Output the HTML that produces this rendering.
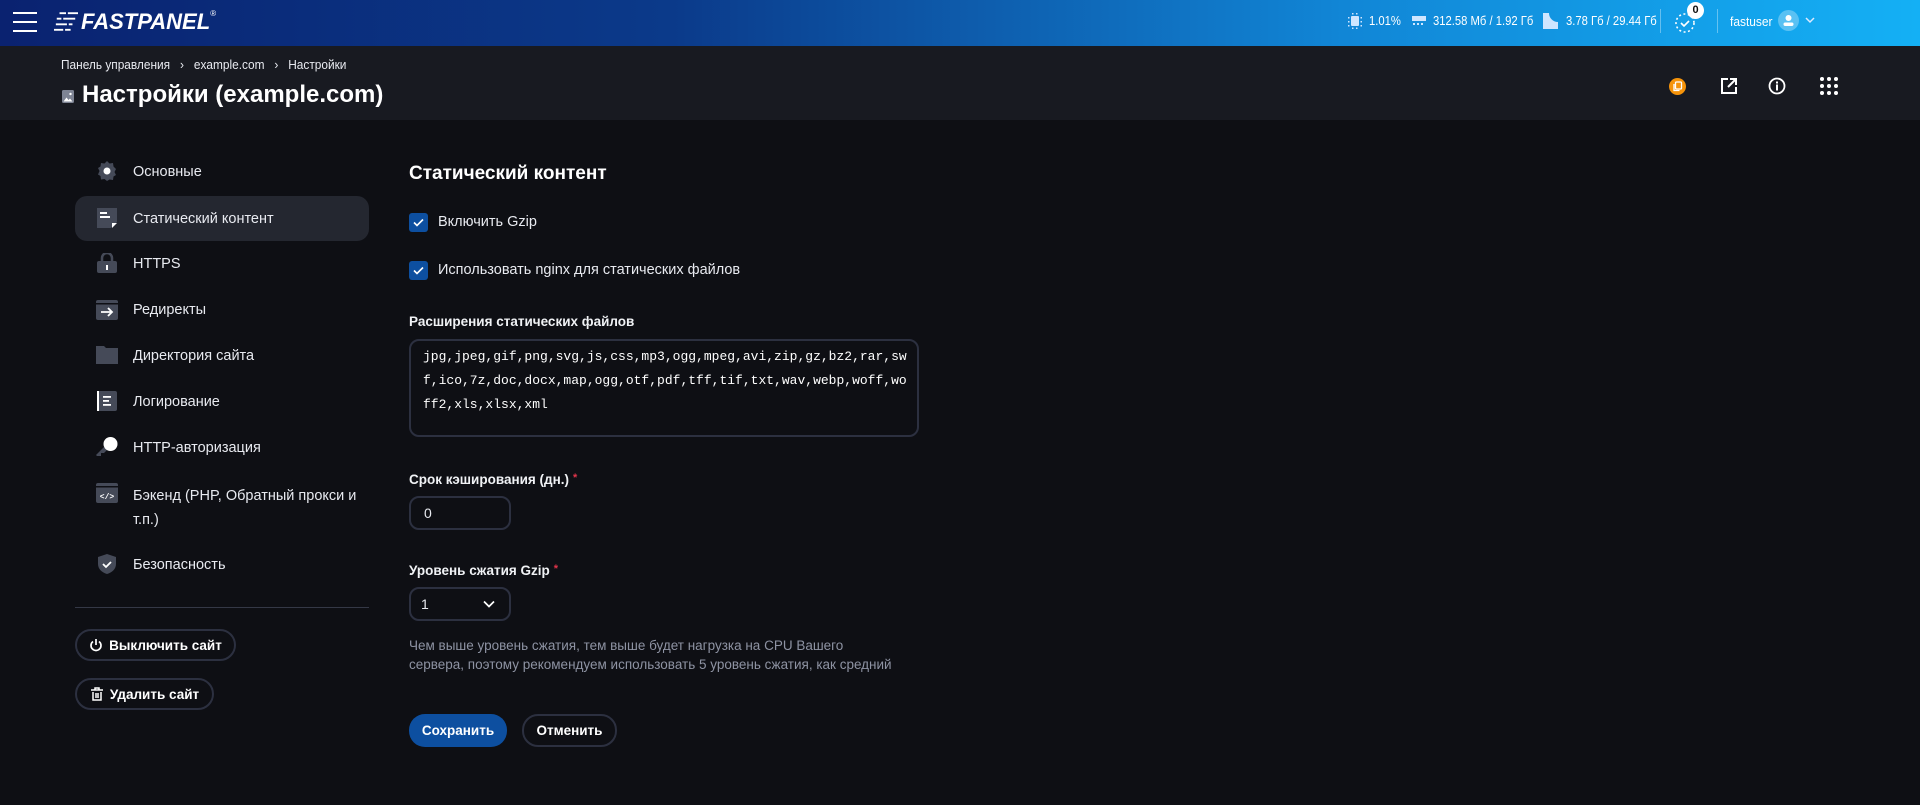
<!DOCTYPE html>
<html><head><meta charset="utf-8"><style>
*{box-sizing:border-box;margin:0;padding:0}
body{width:1920px;height:805px;background:#0e0f14;font-family:"Liberation Sans",sans-serif;color:#e8eaf0;position:relative;overflow:hidden}
.abs{position:absolute}
.hdr{left:0;top:0;width:1920px;height:46px;background:linear-gradient(90deg,#0a2270 0%,#0b3a8a 35%,#1186d6 70%,#14b0f5 100%)}
.sub{left:0;top:46px;width:1920px;height:74px;background:#181a21}
.ht{color:#fff;font-size:12.5px;white-space:nowrap;transform-origin:left center;transform:scaleX(0.9)}
.nav{left:133px;font-size:14.5px;color:#e8eaf0;white-space:nowrap;transform:translateY(-50%)}
.ic{left:96px;width:22px;height:20px;transform:translateY(-50%)}
.lbl{font-size:13.5px;font-weight:bold;color:#f0f2f5;white-space:nowrap}
.star{color:#e0344a;font-size:11px;vertical-align:top;margin-left:4px}
.box{border:2px solid #2c3040;border-radius:10px;background:#0e0f14}
.cb{width:19px;height:19px;background:#0d4fa0;border-radius:3px;left:409px}
.pill{border:2px solid #2c3040;border-radius:16px;font-size:13.5px;font-weight:bold;color:#fff;display:flex;align-items:center;justify-content:center;gap:6px}
</style></head><body>
<div class="abs hdr"></div>
<div class="abs" style="left:13px;top:12px;width:24px;height:2px;background:#fff"></div>
<div class="abs" style="left:13px;top:21px;width:24px;height:2px;background:#fff"></div>
<div class="abs" style="left:13px;top:30px;width:24px;height:2px;background:#fff"></div>
<svg class="abs" style="left:54px;top:11px" width="24" height="21" viewBox="0 0 26 22"><g stroke="#fff" stroke-width="2"><line x1="6" y1="2" x2="26" y2="2"/><line x1="3" y1="8" x2="23" y2="8"/><line x1="2" y1="14" x2="20" y2="14"/><line x1="0" y1="20" x2="18" y2="20"/></g><g fill="#0a2270"><rect x="13" y="0" width="2" height="4"/><rect x="8" y="6" width="2" height="4"/><rect x="14" y="12" width="2" height="4"/><rect x="10" y="18" width="2" height="4"/></g></svg>
<div class="abs" style="left:81px;top:9px;font-size:22px;font-weight:bold;font-style:italic;color:#fff;white-space:nowrap">FASTPANEL<sup style="font-size:8px;font-weight:normal;vertical-align:top">®</sup></div>
<svg class="abs" style="left:1348px;top:13px" width="14" height="16" viewBox="0 0 14 16"><rect x="3" y="3" width="8" height="10" rx="1" fill="#cfe6ff"/><g fill="#cfe6ff"><rect x="0" y="4" width="1.5" height="1.5"/><rect x="0" y="8" width="1.5" height="1.5"/><rect x="0" y="12" width="1.5" height="1.5"/><rect x="12.5" y="4" width="1.5" height="1.5"/><rect x="12.5" y="8" width="1.5" height="1.5"/><rect x="12.5" y="12" width="1.5" height="1.5"/><rect x="4" y="0" width="1.5" height="1.5"/><rect x="8" y="0" width="1.5" height="1.5"/><rect x="4" y="14.5" width="1.5" height="1.5"/><rect x="8" y="14.5" width="1.5" height="1.5"/></g></svg>
<div class="abs ht" style="left:1369px;top:14px">1.01%</div>
<svg class="abs" style="left:1412px;top:15px" width="14" height="12" viewBox="0 0 14 12"><rect x="0" y="1" width="14" height="5" fill="#cfe6ff"/><g fill="#cfe6ff"><rect x="1" y="8" width="2" height="2"/><rect x="5" y="8" width="2" height="2"/><rect x="9" y="8" width="2" height="2"/></g></svg>
<div class="abs ht" style="left:1433px;top:14px">312.58 Мб / 1.92 Гб</div>
<svg class="abs" style="left:1543px;top:13px" width="15" height="16" viewBox="0 0 15 16"><path d="M0 0h6a9 9 0 0 0 9 9v7H0z" fill="#cfe6ff"/></svg>
<div class="abs ht" style="left:1566px;top:14px">3.78 Гб / 29.44 Гб</div>
<div class="abs" style="left:1660px;top:9px;width:1px;height:24px;background:rgba(255,255,255,.35)"></div>
<svg class="abs" style="left:1673px;top:11px" width="24" height="24" viewBox="0 0 24 24"><circle cx="12" cy="12" r="9" fill="none" stroke="#fff" stroke-width="1.6" stroke-dasharray="2 2.5"/><path d="M8 12l3 3 5-5" stroke="#fff" stroke-width="1.6" fill="none"/></svg>
<div class="abs" style="left:1687px;top:2px;width:17px;height:17px;border-radius:50%;background:#fff;color:#111;font-size:11px;font-weight:bold;text-align:center;line-height:17px">0</div>
<div class="abs" style="left:1717px;top:9px;width:1px;height:24px;background:rgba(255,255,255,.35)"></div>
<div class="abs ht" style="left:1730px;top:14px;font-size:13px;transform:scaleX(0.92)">fastuser</div>
<div class="abs" style="left:1778px;top:10px;width:21px;height:21px;border-radius:50%;background:rgba(255,255,255,.3)"></div>
<svg class="abs" style="left:1778px;top:10px" width="21" height="21" viewBox="0 0 21 21"><circle cx="10.5" cy="8" r="3" fill="#fff"/><rect x="5.5" y="12.5" width="10" height="3.5" rx="1.7" fill="#fff"/></svg>
<svg class="abs" style="left:1805px;top:16px" width="10" height="8" viewBox="0 0 10 8"><path d="M1 2l4 4 4-4" stroke="#dceaff" stroke-width="1.5" fill="none"/></svg>

<div class="abs sub"></div>
<div class="abs" style="left:61px;top:58px;font-size:12.5px;color:#e8eaf0;white-space:nowrap;transform-origin:left center;transform:scaleX(0.95)">Панель управления &nbsp;&nbsp;›&nbsp;&nbsp; example.com &nbsp;&nbsp;›&nbsp;&nbsp; Настройки</div>
<svg class="abs" style="left:62px;top:90px" width="12" height="13" viewBox="0 0 12 13"><rect width="12" height="13" rx="1.5" fill="#7e8494"/><path d="M1.5 11.5l3-4 2 2.5 1.5-1.5 2.5 3z" fill="#fff"/><circle cx="8.5" cy="4" r="1.2" fill="#fff"/></svg>
<div class="abs" style="left:82px;top:81px;font-size:24px;font-weight:bold;color:#fff;white-space:nowrap">Настройки (example.com)</div>
<div class="abs" style="left:1669px;top:78px;width:17px;height:17px;border-radius:50%;background:#f5930a"></div>
<svg class="abs" style="left:1672px;top:81px" width="11" height="11" viewBox="0 0 11 11"><rect x="3.5" y="1" width="6" height="7" rx="1" fill="none" stroke="#fff" stroke-width="1.3"/><path d="M2 3v6.5h5.5" fill="none" stroke="#fff" stroke-width="1.3"/></svg>
<svg class="abs" style="left:1720px;top:77px" width="18" height="18" viewBox="0 0 18 18"><path d="M8 2H2v14h14v-6M10 2h6v6M16 2L8 10" fill="none" stroke="#fff" stroke-width="2"/></svg>
<svg class="abs" style="left:1768px;top:77px" width="18" height="18" viewBox="0 0 18 18"><circle cx="9" cy="9" r="7.5" fill="none" stroke="#fff" stroke-width="1.8"/><rect x="8" y="7.5" width="2" height="6" fill="#fff"/><rect x="8" y="4.5" width="2" height="2" fill="#fff"/></svg>
<svg class="abs" style="left:1820px;top:77px" width="18" height="18" viewBox="0 0 18 18"><g fill="#fff"><circle cx="2" cy="2" r="2"/><circle cx="9" cy="2" r="2"/><circle cx="16" cy="2" r="2"/><circle cx="2" cy="9" r="2"/><circle cx="9" cy="9" r="2"/><circle cx="16" cy="9" r="2"/><circle cx="2" cy="16" r="2"/><circle cx="9" cy="16" r="2"/><circle cx="16" cy="16" r="2"/></g></svg>

<div class="abs" style="left:75px;top:196px;width:294px;height:45px;border-radius:12px;background:#242730"></div>
<svg class="abs ic" style="top:171px" viewBox="0 0 22 20"><path d="M11 0l2.5 2.5 3.5-.5.5 3.5L20 8l-1.5 3 1.5 3-2.5 1.5-.5 3.5-3.5-.5L11 20l-2.5-2-3.5.5-.5-3.5L2 13.5l1.5-3.5L2 7l2.5-1.5.5-3.5 3.5.5z" fill="#454a58"/><circle cx="11" cy="10" r="3.5" fill="#fff"/></svg>
<div class="abs nav" style="top:172px">Основные</div>
<svg class="abs ic" style="top:218px" viewBox="0 0 22 20"><path d="M1 0h20v14l-6 6H1z" fill="#454a58"/><rect x="4" y="4" width="7" height="2" fill="#fff"/><rect x="4" y="8" width="10" height="2" fill="#fff"/><path d="M16 15h5l-5 5z" fill="#fff"/></svg>
<div class="abs nav" style="top:219px">Статический контент</div>
<svg class="abs ic" style="top:263px" viewBox="0 0 22 20"><path d="M6 9V5a5 5 0 0 1 10 0v4" stroke="#454a58" stroke-width="2.5" fill="none"/><rect x="1" y="8" width="20" height="12" rx="2" fill="#454a58"/><rect x="10" y="12" width="2" height="5" fill="#fff"/></svg>
<div class="abs nav" style="top:264px">HTTPS</div>
<svg class="abs ic" style="top:310px" viewBox="0 0 22 20"><rect x="0" y="0" width="22" height="20" rx="2" fill="#454a58"/><rect x="0" y="3" width="22" height="1.5" fill="#0e0f14"/><path d="M5 12h11M12 8l4 4-4 4" stroke="#fff" stroke-width="1.8" fill="none"/></svg>
<div class="abs nav" style="top:310px">Редиректы</div>
<svg class="abs ic" style="top:355px" viewBox="0 0 22 20"><path d="M0 1h8l2 2h12v16H0z" fill="#454a58"/></svg>
<div class="abs nav" style="top:356px">Директория сайта</div>
<svg class="abs ic" style="top:401px" viewBox="0 0 22 20"><rect x="1" y="0" width="20" height="20" rx="2" fill="#454a58"/><rect x="1" y="0" width="2" height="20" fill="#fff"/><rect x="7" y="5" width="8" height="1.8" fill="#fff"/><rect x="7" y="9" width="6" height="1.8" fill="#fff"/><rect x="7" y="13" width="8" height="1.8" fill="#fff"/></svg>
<div class="abs nav" style="top:402px">Логирование</div>
<svg class="abs ic" style="top:447px" viewBox="0 0 22 20"><path d="M0 18l8-8 3 3-3 3H5v3H1z" fill="#454a58"/><circle cx="14.5" cy="7" r="7" fill="#fff"/></svg>
<div class="abs nav" style="top:448px">HTTP-авторизация</div>
<svg class="abs ic" style="top:493px" viewBox="0 0 22 20"><rect x="0" y="0" width="22" height="20" rx="2" fill="#454a58"/><rect x="0" y="3" width="22" height="1.5" fill="#0e0f14"/><text x="11" y="16" font-size="8" fill="#fff" text-anchor="middle" font-family="Liberation Mono" font-weight="bold">&lt;/&gt;</text></svg>
<div class="abs" style="left:133px;top:484px;font-size:14.5px;line-height:24px;width:240px">Бэкенд (PHP, Обратный прокси и т.п.)</div>
<svg class="abs ic" style="top:564px" viewBox="0 0 22 20"><path d="M11 0l9 3v7c0 5-4 8.5-9 10-5-1.5-9-5-9-10V3z" fill="#454a58"/><path d="M7 10l3 3 5-5" stroke="#fff" stroke-width="1.8" fill="none"/></svg>
<div class="abs nav" style="top:565px">Безопасность</div>
<div class="abs" style="left:75px;top:607px;width:294px;height:1px;background:#343846"></div>
<div class="abs pill" style="left:75px;top:629px;width:161px;height:32px"><svg width="14" height="14" viewBox="0 0 14 14"><path d="M4 3.5a5 5 0 1 0 6 0" stroke="#fff" stroke-width="1.7" fill="none"/><path d="M7 1v6" stroke="#fff" stroke-width="1.7"/></svg>Выключить сайт</div>
<div class="abs pill" style="left:75px;top:678px;width:139px;height:32px"><svg width="14" height="14" viewBox="0 0 14 14"><path d="M1 3h12M5 3V1h4v2M3 5v8h8V5M6 6v5M8 6v5" stroke="#fff" stroke-width="1.5" fill="none"/></svg>Удалить сайт</div>

<div class="abs" style="left:409px;top:163px;font-size:19px;font-weight:bold;color:#fff;white-space:nowrap">Статический контент</div>
<div class="abs cb" style="top:213px"></div><svg class="abs" style="left:413px;top:218px" width="11" height="9" viewBox="0 0 11 9"><path d="M1 4.5l3 3 6-6" stroke="#fff" stroke-width="1.6" fill="none"/></svg>
<div class="abs" style="left:438px;top:214px;font-size:14.5px;white-space:nowrap">Включить Gzip</div>
<div class="abs cb" style="top:261px"></div><svg class="abs" style="left:413px;top:266px" width="11" height="9" viewBox="0 0 11 9"><path d="M1 4.5l3 3 6-6" stroke="#fff" stroke-width="1.6" fill="none"/></svg>
<div class="abs" style="left:438px;top:262px;font-size:14.5px;white-space:nowrap">Использовать nginx для статических файлов</div>
<div class="abs lbl" style="left:409px;top:314px">Расширения статических файлов</div>
<div class="abs box" style="left:409px;top:339px;width:510px;height:98px"></div>
<div class="abs" style="left:423px;top:345px;width:490px;font-family:'Liberation Mono',monospace;font-size:13px;line-height:24px;color:#fff;white-space:pre">jpg,jpeg,gif,png,svg,js,css,mp3,ogg,mpeg,avi,zip,gz,bz2,rar,sw
f,ico,7z,doc,docx,map,ogg,otf,pdf,tff,tif,txt,wav,webp,woff,wo
ff2,xls,xlsx,xml</div>
<div class="abs lbl" style="left:409px;top:472px">Срок кэширования (дн.)<span class="star">*</span></div>
<div class="abs box" style="left:409px;top:496px;width:102px;height:34px"></div>
<div class="abs" style="left:424px;top:505px;font-size:14px">0</div>
<div class="abs lbl" style="left:409px;top:563px">Уровень сжатия Gzip<span class="star">*</span></div>
<div class="abs box" style="left:409px;top:587px;width:102px;height:34px"></div>
<div class="abs" style="left:421px;top:596px;font-size:14px">1</div>
<svg class="abs" style="left:483px;top:600px" width="12" height="8" viewBox="0 0 12 8"><path d="M1 1.5l5 5 5-5" stroke="#fff" stroke-width="1.7" fill="none"/></svg>
<div class="abs" style="left:409px;top:636px;font-size:13.5px;line-height:19px;color:#8e93a3;white-space:nowrap">Чем выше уровень сжатия, тем выше будет нагрузка на CPU Вашего<br>сервера, поэтому рекомендуем использовать 5 уровень сжатия, как средний</div>
<div class="abs pill" style="left:409px;top:714px;width:98px;height:33px;border:none;background:#0d4fa0">Сохранить</div>
<div class="abs pill" style="left:522px;top:714px;width:95px;height:33px">Отменить</div>
</body></html>
